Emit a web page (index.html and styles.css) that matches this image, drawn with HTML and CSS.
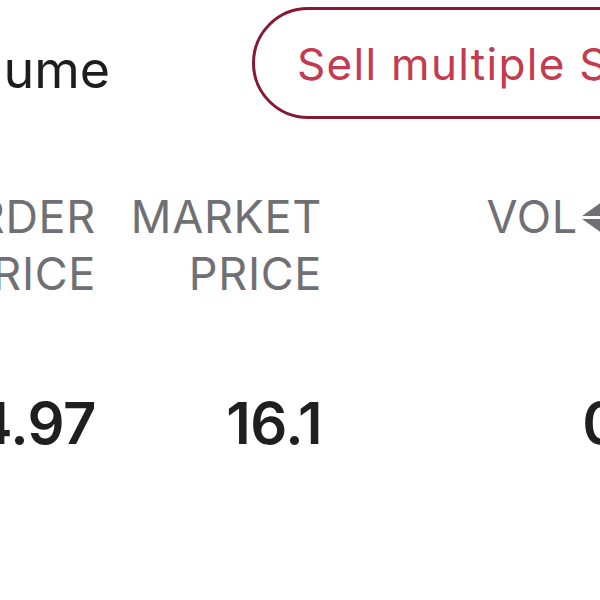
FILE: index.html
```html
<!DOCTYPE html>
<html>
<head>
<meta charset="utf-8">
<link rel="stylesheet" href="styles.css">
</head>
<body>
<div class="page">
  <div class="top">
    <div class="label-box"><span class="label">Volume</span></div>
    <button class="sell-btn">Sell multiple Stocks</button>
  </div>
  <div class="table">
    <div class="th col1"><span>ORDER</span><span>PRICE</span></div>
    <div class="th col2"><span>MARKET</span><span>PRICE</span></div>
    <div class="th col3">
      <span>VOL</span>
      <svg class="sort" width="39" height="32" viewBox="0 0 39 32"><polygon points="19.5,1 38,14 1,14" fill="#707074"/><polygon points="1,17 38,17 19.5,30" fill="#707074"/></svg>
    </div>
    <div class="td col1">4.97</div>
    <div class="td col2">16.1</div>
    <div class="td col3">0</div>
  </div>
</div>
</body>
</html>
```
FILE: styles.css
```css
html, body {
  margin: 0;
  padding: 0;
  background: #ffffff;
}
body {
  width: 600px;
  height: 600px;
  overflow: hidden;
  font-family: "Inter", "Liberation Sans", sans-serif;
}
.page {
  display: flex;
  flex-direction: column;
}
.top {
  display: flex;
  align-items: center;
  margin-top: 7px;
  height: 112px;
}
.label-box {
  width: 110px;
  flex-shrink: 0;
  display: flex;
  justify-content: flex-end;
  align-self: flex-start;
  margin-top: 33px;
}
.label {
  white-space: nowrap;
  font-size: 52px;
  line-height: 60px;
  color: #1d1d1f;
}
.sell-btn {
  flex-shrink: 0;
  margin-left: 142px;
  height: 112px;
  box-sizing: border-box;
  border: 3px solid #861a33;
  border-radius: 56px;
  background: #fff;
  padding: 2px 40px 0 42px;
  font-family: inherit;
  font-size: 44px;
  letter-spacing: 1.3px;
  color: #c43a4f;
  white-space: nowrap;
  display: flex;
  align-items: center;
}
.table {
  display: grid;
  grid-template-columns: 96px 226px 298px;
  margin-top: 69px;
}
.th {
  display: flex;
  flex-direction: column;
  align-items: flex-end;
  font-size: 45px;
  line-height: 57px;
  letter-spacing: 0.7px;
  color: #707074;
  white-space: nowrap;
}
.th.col3 {
  flex-direction: row;
  justify-content: flex-end;
  align-items: flex-start;
  gap: 3px;
}
.sort {
  margin-top: 14px;
  flex-shrink: 0;
}
.td {
  margin-top: 86px;
  display: flex;
  justify-content: flex-end;
  font-size: 58px;
  line-height: 70px;
  font-weight: 600;
  letter-spacing: -0.5px;
  color: #1f1f1f;
  white-space: nowrap;
}
```
